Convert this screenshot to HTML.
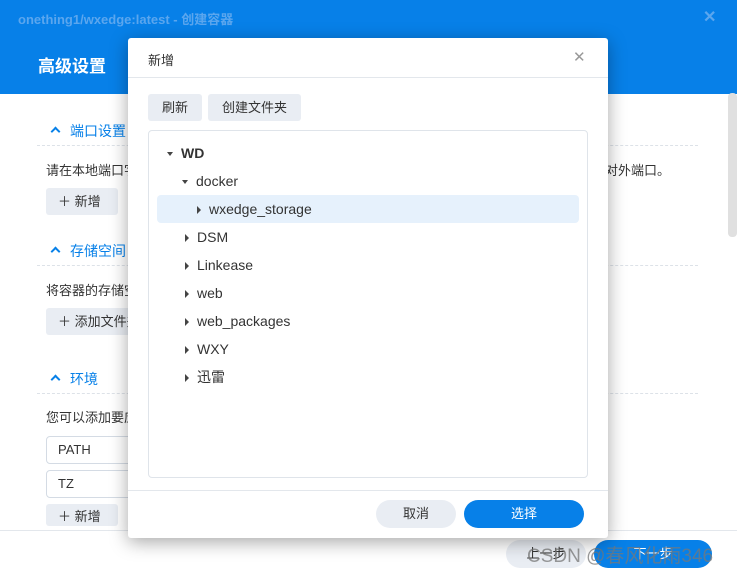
<!DOCTYPE html>
<html><head><meta charset="utf-8"><style>
*{box-sizing:border-box;margin:0;padding:0}
body{width:737px;height:573px;overflow:hidden;position:relative;background:#fff;font-family:"Liberation Sans","Noto Sans CJK SC",sans-serif;font-size:13px;color:#333}
.abs{position:absolute}
.hdr{left:0;top:0;width:737px;height:94px;background:#0780e8}
.t1{left:18px;top:9px;color:#5ba6ee;font-weight:bold;font-size:13px}
.x1{left:703px;top:7px;color:#5ba6ee;font-size:16px;font-weight:bold}
.t2{left:38px;top:52px;color:#fff;font-size:17px;font-weight:bold}
.sec{color:#0780e8;font-size:14px}
.chev{display:inline-block;width:7px;height:7px;border-left:2px solid #0780e8;border-top:2px solid #0780e8;transform:rotate(45deg);margin:0 11px 0 4px;vertical-align:1px}
.dash{border-top:1px dashed #dde2e8;height:0;left:37px;width:661px}
.btn{background:#e9edf3;border-radius:3px;color:#333;font-size:13px;padding:0 12px;height:27px;line-height:27px}
.inp{border:1px solid #d4dbe4;border-radius:4px;left:46px;width:100px;height:28px;line-height:26px;padding-left:11px;font-size:13px}
.dlg{left:128px;top:38px;width:480px;height:500px;background:#fff;border-radius:3px;box-shadow:0 4px 18px rgba(0,0,0,.35)}
.row{position:absolute;height:28px;line-height:28px;font-size:14px;color:#333}
.tri{display:inline-block;width:0;height:0;border-left:3.5px solid transparent;border-right:3.5px solid transparent;border-top:4.5px solid #444;vertical-align:middle;margin-right:8px}
.trr{display:inline-block;width:0;height:0;border-top:4px solid transparent;border-bottom:4px solid transparent;border-left:4.5px solid #444;vertical-align:middle;margin-right:8px}
.sb{left:728px;top:93px;width:9px;height:144px;background:#e0e0e0;border-radius:4px}
</style></head><body>
<div class="abs hdr"></div>
<div class="abs t1">onething1/wxedge:latest - 创建容器</div>
<div class="abs x1">✕</div>
<div class="abs t2">高级设置</div>
<div class="abs sb"></div>

<div class="abs sec" style="left:48px;top:121px"><span class="chev"></span>端口设置</div>
<div class="abs dash" style="top:145px"></div>
<div class="abs" style="left:46px;top:160px">请在本地端口字段中指定对外端口。</div>
<div class="abs" style="left:605px;top:160px">对外端口。</div>
<div class="abs btn" style="left:46px;top:188px;width:72px">＋ 新增</div>
<div class="abs sec" style="left:48px;top:241px"><span class="chev"></span>存储空间</div>
<div class="abs dash" style="top:265px"></div>
<div class="abs" style="left:46px;top:280px">将容器的存储空间</div>
<div class="abs btn" style="left:46px;top:308px">＋ 添加文件夹</div>
<div class="abs sec" style="left:48px;top:369px"><span class="chev"></span>环境</div>
<div class="abs dash" style="top:393px"></div>
<div class="abs" style="left:46px;top:407px">您可以添加要应用</div>
<div class="abs inp" style="top:436px">PATH</div>
<div class="abs inp" style="top:470px">TZ</div>
<div class="abs btn" style="left:46px;top:504px;width:72px;height:22px;line-height:26px;overflow:hidden">＋ 新增</div>
<div class="abs" style="left:0;top:530px;width:737px;border-top:1px solid #e3e7ec;height:43px;background:#fff"></div>
<div class="abs" style="left:506px;top:540px;width:80px;height:28px;border-radius:14px;background:#e9edf3;text-align:center;line-height:28px">上一步</div>
<div class="abs" style="left:594px;top:540px;width:118px;height:28px;border-radius:14px;background:#0780e8;color:#fff;text-align:center;line-height:28px">下一步</div>
<div class="abs" style="left:527px;top:541px;font-size:19px;color:rgba(120,120,120,.75)">CSDN @春风化雨346</div>

<div class="abs dlg">
 <div class="abs" style="left:20px;top:12px;font-size:13px">新增</div>
 <div class="abs" style="left:445px;top:10px;font-size:15px;color:#999">✕</div>
 <div class="abs" style="left:0;top:39px;width:480px;border-top:1px solid #e3e7ec"></div>
 <div class="abs btn" style="left:20px;top:56px;width:54px;padding:0;text-align:center">刷新</div>
 <div class="abs btn" style="left:80px;top:56px;width:93px;padding:0;text-align:center">创建文件夹</div>
 <div class="abs" style="left:20px;top:92px;width:440px;height:348px;border:1px solid #dfe4ea;border-radius:4px">
  <div class="row" style="left:18px;top:8px;font-weight:bold"><span class="tri"></span>WD</div>
  <div class="row" style="left:33px;top:36px"><span class="tri"></span>docker</div>
  <div class="row" style="left:8px;top:64px;width:422px;background:#e6f1fc;border-radius:4px;padding-left:40px"><span class="trr"></span>wxedge_storage</div>
  <div class="row" style="left:36px;top:92px"><span class="trr"></span>DSM</div>
  <div class="row" style="left:36px;top:120px"><span class="trr"></span>Linkease</div>
  <div class="row" style="left:36px;top:148px"><span class="trr"></span>web</div>
  <div class="row" style="left:36px;top:176px"><span class="trr"></span>web_packages</div>
  <div class="row" style="left:36px;top:204px"><span class="trr"></span>WXY</div>
  <div class="row" style="left:36px;top:232px"><span class="trr"></span>迅雷</div>
 </div>
 <div class="abs" style="left:0;top:452px;width:480px;border-top:1px solid #e3e7ec"></div>
 <div class="abs" style="left:248px;top:462px;width:80px;height:28px;border-radius:14px;background:#e9edf3;text-align:center;line-height:28px">取消</div>
 <div class="abs" style="left:336px;top:462px;width:120px;height:28px;border-radius:14px;background:#0780e8;color:#fff;text-align:center;line-height:28px">选择</div>
</div>
</body></html>
